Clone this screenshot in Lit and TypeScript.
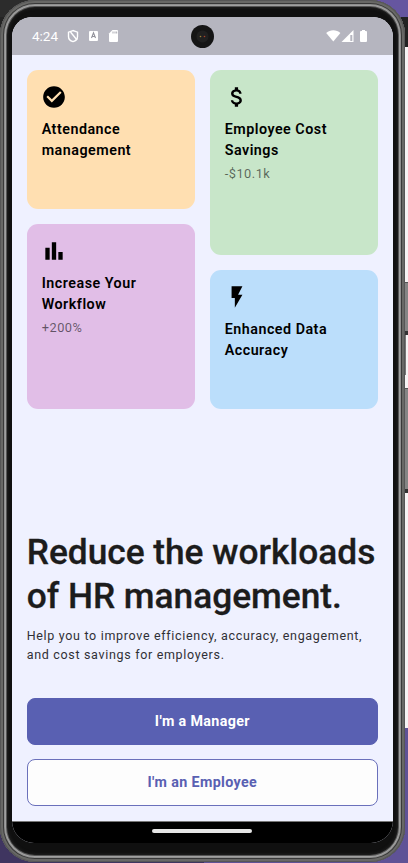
import { LitElement, html, css, svg } from "lit";
import { customElement, property } from "lit/decorators.js";

const icons: Record<string, unknown> = {
  check: svg`<path d="M12 2C6.48 2 2 6.48 2 12s4.480 10 10 10 10-4.480 10-10S17.520 2 12 2zm-2 15l-5-5 1.410-1.410L10 14.170l7.590-7.590L19 8l-9 9z"/>`,
  dollar: svg`<path d="M11.800 10.900c-2.270-.59-3-1.200-3-2.150 0-1.090 1.010-1.850 2.700-1.850 1.780 0 2.440.85 2.500 2.100h2.210c-.07-1.720-1.120-3.300-3.210-3.810V3h-3v2.160c-1.940.42-3.500 1.680-3.500 3.610 0 2.310 1.910 3.460 4.700 4.130 2.500.6 3 1.480 3 2.410 0 .69-.49 1.790-2.700 1.790-2.060 0-2.870-.92-2.980-2.100h-2.200c.12 2.190 1.760 3.420 3.680 3.830V21h3v-2.150c1.950-.37 3.500-1.500 3.500-3.550 0-2.840-2.430-3.810-4.700-4.400z"/>`,
  bars: svg`<path d="M4 9h4v11H4zM10 4h4v16h-4zM16 13h4v7h-4z"/>`,
  bolt: svg`<path d="M7 2v11h3v9l7-12h-4l4-8z"/>`,
};

@customElement("stat-card")
export class StatCard extends LitElement {
  @property() icon = "";
  @property() heading = "";
  @property() note = "";

  static styles = css`
    :host { display: block; box-sizing: border-box; padding: 14px 15px; border-radius: 11px; }
    .icon { display: block; width: 26px; height: 26px; margin-left: -1px; }
    .heading { margin: 9px 0 0; font-size: 14.300px; line-height: 21.400px; font-weight: 600; letter-spacing: 0.500px; color: #000; }
    .note { margin: 4.500px 0 0; font-size: 12.800px; line-height: 16px; letter-spacing: 0.500px; color: rgba(0, 0, 0, 0.560); }
  `;

  render() {
    return html`
      <svg class="icon" viewBox="0 0 24 24">${icons[this.icon]}</svg>
      <h2 class="heading">${this.heading}</h2>
      ${this.note ? html`<p class="note">${this.note}</p>` : null}
    `;
  }
}

@customElement("app-root")
export class AppRoot extends LitElement {
  static styles = css`
    :host { display: block; font-family: Roboto, "Noto Sans", sans-serif; }
    * { box-sizing: border-box; }
    .desktop {
      position: relative; width: 408px; height: 863px; overflow: hidden;
      background:
        linear-gradient(#6656a0 0 17px, #222 17px 47px, #f7f3f4 47px 728px, #5f5296 728px) right / 204px 100% no-repeat,
        linear-gradient(#2c2c2c 0 17px, #242424 17px 75px, #656565 75px 820px, #3f3560 820px);
    }
    .key { position: absolute; left: 403px; width: 6px; border: 1px solid #555; background: #858585; border-bottom: 4px solid #333; }
    .power { top: 282px; height: 53px; }
    .volume { top: 388px; height: 105px; }
    .edge { position: absolute; left: 404px; top: 335px; width: 2px; height: 40px; background: #777; }
    .phone {
      position: relative; width: 405px; height: 862px; padding: 17px 12px 19px;
      border-radius: 35px; background: #101010;
      box-shadow: inset 0 0 0 1px #565656, inset 0 0 0 3px #686866, inset 0 0 0 4px #393939,
        inset 0 0 0 5px #8f8f8f, inset 0 0 0 6px #a0a0a0, inset 0 0 0 7px #555, inset 0 0 3px 8px #202020;
    }
    .screen { display: flex; flex-direction: column; width: 381px; height: 826px; overflow: hidden; border-radius: 20px 20px 22px 22px; background: #eff1ff; }
    .status { flex: none; display: flex; align-items: center; height: 38px; padding: 0 23.500px 0 20px; background: #b5b5bf; color: #fff; }
    .time { width: 35px; font-size: 13.500px; line-height: 38px; }
    .tray { display: block; width: 86px; height: 14px; }
    .camera { width: 23px; height: 23px; margin-left: 38px; }
    .signals { width: 44px; height: 14px; margin-left: auto; }
    .main { flex: 1; display: flex; flex-direction: column; padding: 15px 15px 15px 14.700px; }
    .cards { display: grid; grid-template-columns: 168px 168px; gap: 15px; }
    .column { display: grid; gap: 15px; height: 339px; }
    .left { grid-template-rows: 138.500px 185.500px; }
    .right { grid-template-rows: 185px 139px; }
    .orange { background: #ffdfb1; }
    .purple { background: #e1bee7; }
    .green { background: #c8e6c9; }
    .blue { background: #bbdefb; }
    .title { margin: auto 0 0; font-size: 35.300px; line-height: 44.500px; font-weight: 500; letter-spacing: -0.020px; color: #1c1c1c; -webkit-text-stroke: 0.300px #1c1c1c; white-space: nowrap; }
    .lead { margin: 7px 0 34px; font-size: 12.500px; line-height: 19.200px; letter-spacing: 0.680px; color: #303036; white-space: nowrap; }
    .button { display: block; width: 100%; height: 46.500px; flex: none; border: 1px solid #6a70bb; border-radius: 8px; font: 700 14.300px/44px Roboto, sans-serif; letter-spacing: 0.350px; padding: 0; }
    .filled { background: #5960b2; border-color: #5960b2; color: #fff; }
    .outlined { margin-top: 14.500px; background: #fdfdfd; color: #5960b2; }
    .nav { flex: none; display: flex; justify-content: center; height: 22.500px; padding-top: 7.500px; background: #000; border-top: 1px solid #777; }
    .handle { width: 100px; height: 4px; margin-right: 1px; border-radius: 2px; background: #e6e6e6; }
  `;

  render() {
    return html`
      <div class="desktop">
        <div class="key power"></div>
        <div class="key volume"></div>
        <div class="edge"></div>
        <div class="phone">
          <div class="screen">
            <div class="status">
              <span class="time">4:24</span>
              <svg class="tray" viewBox="0 0 86 14">
                <path d="M6 1.600 1.500 3.200v4.200c0 2.600 2 4.500 4.500 5.200 2.500-.7 4.500-2.600 4.500-5.200V3.200z" fill="none" stroke="#fff" stroke-width="1.400"/>
                <path d="m3.500 3 6.500 8" stroke="#fff" stroke-width="1.400"/>
                <rect x="22" y="2" width="9" height="10" rx="1" fill="#fff"/>
                <path d="m24.500 9 2-5.200 2 5.200M25.200 7.500h2.600" fill="none" stroke="#92929b" stroke-width="1.100"/>
                <path d="M45.500 1H50a1 1 0 0 1 1 1v10a1 1 0 0 1-1 1h-7a1 1 0 0 1-1-1V4.500z" fill="#fff"/>
                <path d="M46 2.500v2M48 2.500v2M49.700 2.500v2" stroke="#aaaab2"/>
              </svg>
              <svg class="camera" viewBox="0 0 23 23">
                <circle cx="11.500" cy="11.500" r="11.500" fill="#151515"/>
                <circle cx="11.500" cy="11.500" r="6" fill="#202020"/>
                <circle cx="9.500" cy="11.500" r=".8" fill="#9a8238"/>
                <circle cx="13.500" cy="11.500" r=".8" fill="#a83e28"/>
              </svg>
              <svg class="signals" viewBox="0 0 44 14" fill="#fff">
                <path d="M7.300 12.500.2 4c4-3.700 10.200-3.700 14.200 0z"/>
                <path d="M15.500 13 27.500 1v12z"/>
                <path d="M24.300 6h2V12h-2z" fill="#b5b5bf"/>
                <path d="M36 1h3v1h1a1 1 0 0 1 1 1v9a1 1 0 0 1-1 1h-5a1 1 0 0 1-1-1V3a1 1 0 0 1 1-1h1z"/>
              </svg>
            </div>
            <main class="main">
              <div class="cards">
                <div class="column left">
                  <stat-card class="orange" icon="check" heading="Attendance management"></stat-card>
                  <stat-card class="purple" icon="bars" heading="Increase Your Workflow" note="+200%"></stat-card>
                </div>
                <div class="column right">
                  <stat-card class="green" icon="dollar" heading="Employee Cost Savings" note="-$10.1k"></stat-card>
                  <stat-card class="blue" icon="bolt" heading="Enhanced Data Accuracy"></stat-card>
                </div>
              </div>
              <h1 class="title">Reduce the workloads<br>of HR management.</h1>
              <p class="lead">Help you to improve efficiency, accuracy, engagement,<br>and cost savings for employers.</p>
              <button class="button filled">I'm a Manager</button>
              <button class="button outlined">I'm an Employee</button>
            </main>
            <div class="nav"><div class="handle"></div></div>
          </div>
        </div>
      </div>
    `;
  }
}
